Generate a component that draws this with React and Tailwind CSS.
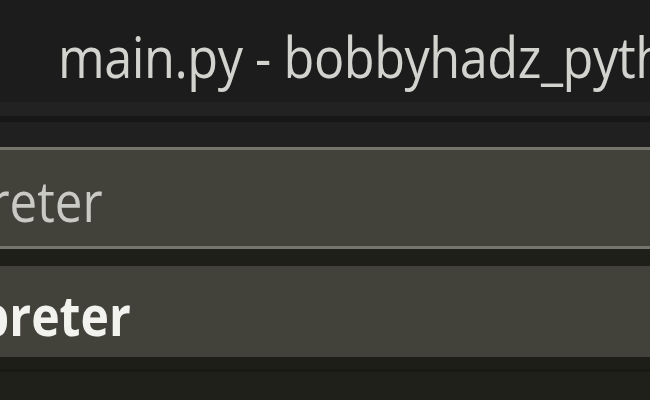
export default function App() {
  const font = { fontFamily: '"Open Sans", "Noto Sans", sans-serif' };
  return (
    <div className="w-[650px] h-[400px] overflow-hidden flex flex-col bg-[#20201b]" style={font}>
      <div className="h-[102px] shrink-0 bg-[#1c1c1c] flex items-start overflow-hidden pl-[58px] pt-[16px]">
        <div className="whitespace-nowrap text-[56px] leading-[80px] text-[#d2d2ce] origin-left scale-x-[0.9] tracking-[-0.5px]">
          main.py - bobbyhadz_python
        </div>
      </div>
      <div className="h-[14px] shrink-0 bg-[#222222]" />
      <div className="h-[6px] shrink-0 bg-[#171717]" />
      <div className="h-[25px] shrink-0 bg-[#202020]" />
      <div className="h-[102px] shrink-0 border-y-[3px] border-[#75756d] bg-[#42423a] flex items-center overflow-hidden">
        <div className="w-[103px] shrink-0 flex justify-end overflow-hidden">
          <span className="whitespace-nowrap text-[56px] leading-[60px] text-[#cacac4] origin-right scale-x-[0.88] pt-[4px]">
            Python: Select Interpreter
          </span>
        </div>
      </div>
      <div className="h-[17px] shrink-0 bg-[#1f1f19]" />
      <div className="h-[91px] shrink-0 bg-[#42423a] flex items-center overflow-hidden">
        <div className="w-[131px] shrink-0 flex justify-end overflow-hidden">
          <span className="whitespace-nowrap text-[56px] leading-[60px] font-bold text-[#f2f2ee] origin-right scale-x-[0.86] pt-[4px]">
            Python: Select Interpreter
          </span>
        </div>
      </div>
      <div className="h-[12px] shrink-0 bg-[#1e1e18]" />
      <div className="h-[3px] shrink-0 bg-[#191915]" />
      <div className="flex-1 bg-[#20201b]" />
    </div>
  );
}
